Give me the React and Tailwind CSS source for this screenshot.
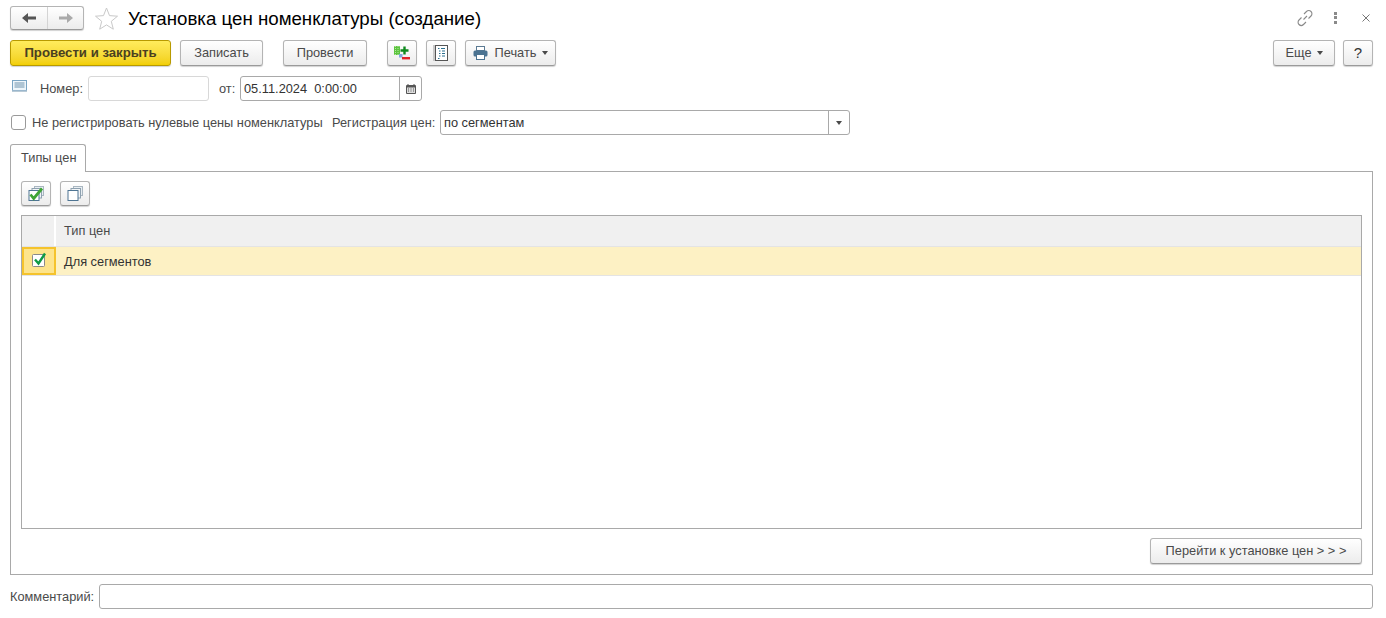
// App.jsx — 1C document form: price setup

const btn = 'h-[26px] flex items-center justify-center rounded-[3px] border border-[#b4b4b4] border-b-[#9a9a9a] bg-gradient-to-b from-white to-[#ececec] text-[12.8px] text-[#4a4a4a] shadow-[0_1px_1px_rgba(0,0,0,0.18)]'
const field = 'h-[25px] rounded-[3px] border border-[#a9a9a9] bg-white'

function Caret() {
  return <span className="inline-block border-x-[3.5px] border-t-[4px] border-x-transparent border-t-[#4a4a4a]" />
}

function Arrow({ dir, color }) {
  return (
    <svg width="16" height="12" viewBox="0 0 16 12">
      <path d={dir === 'left' ? 'M1 6l6-5v3.5h8v3H7V11z' : 'M15 6L9 1v3.5H1v3h8V11z'} fill={color} />
    </svg>
  )
}

function StackIcon({ checked }) {
  return (
    <svg width="18" height="17" viewBox="0 0 18 17">
      <rect x="7.5" y="1.5" width="9" height="9" fill="#e8eef2" stroke="#a9b6c0" />
      <rect x="5" y="3.5" width="9.5" height="9.5" fill="#f2f5f7" stroke="#8ea1b0" />
      <rect x="2" y="5.5" width="10" height="10" fill="#fff" stroke="#4f7593" />
      {checked && <path d="M3.5 9.500l3.200 4L15 3.500" fill="none" stroke="#3fa535" strokeWidth="2.800" />}
    </svg>
  )
}

function App() {
  return (
    <div className="w-[1386px] h-[618px] overflow-hidden bg-white pl-[10px] pr-[13px] font-['Liberation_Sans',Arial,sans-serif] text-[12.8px] text-[#4a4a4a]">
      {/* Title row */}
      <div className="h-[40px] pt-[6px] flex items-start">
        <div className={`${btn} w-[74px] !h-[24px] !justify-start`}>
          <span className="w-[37px] flex justify-center border-r border-[#d4d4d4] h-full items-center"><Arrow dir="left" color="#555" /></span>
          <span className="flex-1 flex justify-center"><Arrow dir="right" color="#aaa" /></span>
        </div>
        <svg className="ml-[10px]" width="25" height="25" viewBox="0 0 25 25">
          <path d="M12.5 2l3 7.6 8 .6-6.200 5.100 2 7.900-6.800-4.300-6.800 4.300 2-7.900L1.500 10.200l8-.6z" fill="#fff" stroke="#c9c9c9" />
        </svg>
        <span className="ml-[9px] text-[18.7px] leading-[26px] text-black">Установка цен номенклатуры (создание)</span>
        <div className="ml-auto flex items-center h-[23px]">
          <svg width="18" height="18" viewBox="0 0 18 18" fill="none" stroke="#8a8a8a" strokeWidth="1.100">
            <path d="M7.500 10.500l3.500-3.500M8 5l2.500-2.500a3 3 0 0 1 4.500 4.500L12.500 9.500M10 13l-2.500 2.500a3 3 0 0 1-4.500-4.500L5.500 8.500" />
          </svg>
          <span className="ml-[20px] flex flex-col gap-[1.500px]">
            <span className="w-[3px] h-[3px] bg-[#8a8a8a]" />
            <span className="w-[3px] h-[3px] bg-[#8a8a8a]" />
            <span className="w-[3px] h-[3px] bg-[#8a8a8a]" />
          </span>
          <svg className="ml-[25px] mr-[3px]" width="8" height="8" viewBox="0 0 8 8" stroke="#777" strokeWidth="1">
            <path d="M.5.5l7 7M7.500.5l-7 7" />
          </svg>
        </div>
      </div>

      {/* Command bar */}
      <div className="h-[26px] flex items-center">
        <div className="h-[26px] w-[161px] flex items-center justify-center rounded-[3px] border border-[#b89a00] bg-gradient-to-b from-[#ffec5c] to-[#f2cf00] text-[13.200px] font-bold text-[#4a4020] shadow-[0_1px_1px_rgba(0,0,0,0.18)]">Провести и закрыть</div>
        <div className={`${btn} w-[83px] ml-[9px]`}>Записать</div>
        <div className={`${btn} w-[84px] ml-[20px]`}>Провести</div>
        <div className={`${btn} w-[30px] ml-[20px]`}>
          <svg width="18" height="18" viewBox="0 0 18 18">
            <rect x="1" y="2" width="6" height="9" rx="1" fill="#5cc43f" />
            <path d="M2.500 2v9M5 2v9" stroke="#b6e8a0" strokeDasharray="1 1" />
            <path d="M11.500 2.500v8M7.500 6.500h8" stroke="#0f8a1f" strokeWidth="2.400" />
            <rect x="6" y="10" width="3.500" height="3.500" fill="#7fa8dc" />
            <rect x="9" y="13" width="8" height="2.400" fill="#e0242a" />
          </svg>
        </div>
        <div className={`${btn} w-[30px] ml-[9px]`}>
          <svg width="17" height="18" viewBox="0 0 17 18">
            <rect x="0" y="1" width="3" height="16" fill="#c9c9c9" />
            <rect x="2.500" y="1.500" width="12" height="15" fill="#fff" stroke="#555" />
            <path d="M5 4.500h1.500M8 4.500h4M6 7h1.500M9 7h3M6 9.500h1.500M9 9.500h3M6 12h1.500M9 12h3M5 14.500h1.500" stroke="#2a6f8f" />
          </svg>
        </div>
        <div className={`${btn} w-[91px] ml-[9px]`}>
          <svg width="15" height="14" viewBox="0 0 15 14">
            <rect x="3.500" y=".5" width="8" height="4" fill="#fff" stroke="#5b7a93" />
            <rect x="0.500" y="4.500" width="14" height="6" rx="1.500" fill="#4b7391" />
            <rect x="3.500" y="8.500" width="8" height="5" fill="#fff" stroke="#4b7391" />
          </svg>
          <span className="ml-[7px] mr-[6px]">Печать</span>
          <Caret />
        </div>
        <div className={`${btn} w-[62px] ml-auto gap-[5px]`}>Еще <Caret /></div>
        <div className={`${btn} w-[30px] ml-[8px] !text-[15px] !text-[#333]`}>?</div>
      </div>

      {/* Number and date */}
      <div className="mt-[10px] h-[25px] flex items-center">
        <svg className="ml-[2px] -mt-[6px]" width="15" height="12" viewBox="0 0 15 12">
          <rect x=".5" y=".5" width="14" height="10" fill="#eef6fb" stroke="#7aa5c4" />
          <path d="M2.500 3h10M2.500 5h10M2.500 7h10" stroke="#6f93ad" />
          <rect x="0" y="10.500" width="15" height="1.500" fill="#b9cad6" />
        </svg>
        <span className="ml-[13px] w-[48px]">Номер:</span>
        <div className="w-[121px] h-[25px] rounded-[3px] border border-[#d8d8d8] bg-white" />
        <span className="ml-[10px] w-[21px]">от:</span>
        <div className={`${field} w-[182px] flex items-center`}>
          <span className="flex-1 pl-[3px] text-[#333] whitespace-pre">05.11.2024  0:00:00</span>
          <span className="w-[22px] h-full border-l border-[#a9a9a9] flex items-center justify-center">
            <svg width="10" height="10" viewBox="0 0 10 10">
              <rect x="0" y="1" width="10" height="9" rx="1" fill="#555" />
              <rect x="1" y="3.500" width="8" height="5.500" fill="#ddd" />
              <path d="M2 0v2M8 0v2" stroke="#555" />
              <path d="M2 5h1M4.500 5h1M7 5h1M2 7h1M4.500 7h1M7 7h1" stroke="#555" />
            </svg>
          </span>
        </div>
      </div>

      {/* Registration options */}
      <div className="mt-[9px] h-[25px] flex items-center">
        <span className="ml-[1px] w-[15px] h-[15px] rounded-[3px] border border-[#9a9a9a] bg-white" />
        <span className="ml-[6px] w-[300px]">Не регистрировать нулевые цены номенклатуры</span>
        <span className="w-[108px]">Регистрация цен:</span>
        <div className={`${field} w-[410px] flex items-center`}>
          <span className="flex-1 pl-[3px] text-[#333]">по сегментам</span>
          <span className="w-[21px] h-full border-l border-[#a9a9a9] flex items-center justify-center"><Caret /></span>
        </div>
      </div>

      {/* Tab */}
      <div className="mt-[9px] w-[76px] h-[28px] -mb-px relative z-10 rounded-t-[3px] border border-b-0 border-[#a9a9a9] bg-white flex items-center pl-[10px] pb-[2px]">Типы цен</div>

      {/* Tab panel */}
      <div className="h-[404px] border border-[#a9a9a9] px-[10px] pt-[9px]">
        <div className="flex gap-[9px]">
          <div className={`${btn} w-[30px] !h-[25px]`}><StackIcon checked /></div>
          <div className={`${btn} w-[30px] !h-[25px]`}><StackIcon /></div>
        </div>
        <div className="mt-[9px] h-[314px] border border-[#a9a9a9]">
          <div className="h-[31px] flex bg-[#f0f0f0] border-b border-[#e4e4e4]">
            <span className="w-[34px] border-r-2 border-white" />
            <span className="pl-[8px] leading-[30px]">Тип цен</span>
          </div>
          <div className="h-[29px] flex bg-[#fdf1c4] border-b border-[#e4e4e4]">
            <span className="w-[34px] h-[28px] border-2 border-[#f5c32c] bg-[#fde48c] flex items-center justify-center">
              <svg className="-mt-[4px]" width="17" height="17" viewBox="0 0 17 17">
                <rect x="1.500" y="3.500" width="12" height="12" rx="1" fill="#fff" stroke="#8a8a8a" />
                <path d="M4 8.500l3.500 4L14 2.500" fill="none" stroke="#0f9a45" strokeWidth="2.400" />
              </svg>
            </span>
            <span className="pl-[8px] leading-[29px] text-[#333]">Для сегментов</span>
          </div>
        </div>
        <div className="mt-[9px] flex justify-end">
          <div className={`${btn} w-[212px]`}>Перейти к установке цен &gt; &gt; &gt;</div>
        </div>
      </div>

      {/* Comment */}
      <div className="mt-[9px] flex items-center">
        <span className="w-[89px]">Комментарий:</span>
        <div className={`${field} flex-1`} />
      </div>
    </div>
  )
}

export default App
